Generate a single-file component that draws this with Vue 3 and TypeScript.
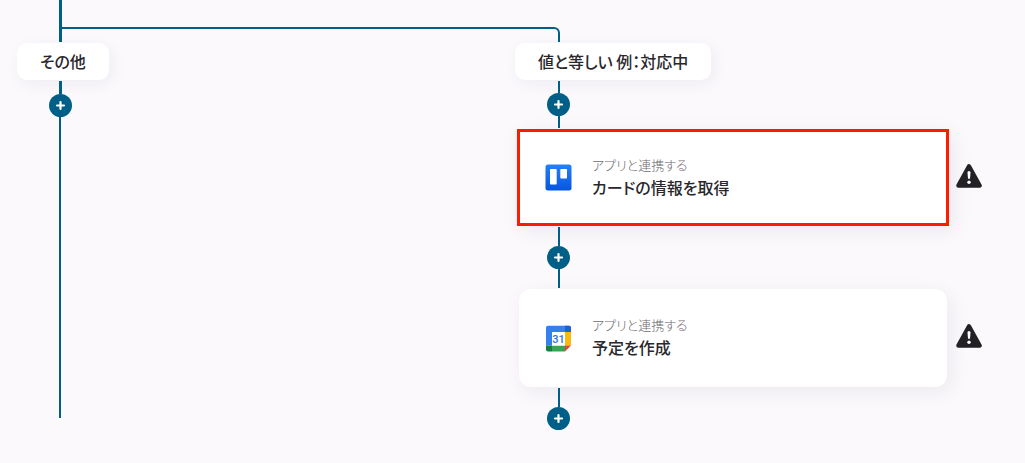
<script setup lang="ts">
interface Step {
  id: string
  app: 'trello' | 'calendar'
  kind: string
  title: string
  selected: boolean
}

const steps: Step[] = [
  { id: 'card', app: 'trello', kind: 'アプリと連携する', title: 'カードの情報を取得', selected: true },
  { id: 'event', app: 'calendar', kind: 'アプリと連携する', title: '予定を作成', selected: false },
]
</script>

<template>
  <main class="flow">
    <div class="fork">
      <span class="trunk"></span>
      <span class="elbow"></span>
    </div>

    <div class="branches">
      <section class="branch">
        <button type="button" class="label">その他</button>
        <div class="connector">
          <span class="line thick"></span>
          <button type="button" class="add" aria-label="追加">
            <svg viewBox="0 0 23 23"><path d="M11.5 8v7M8 11.5h7" /></svg>
          </button>
          <span class="line tail"></span>
        </div>
      </section>

      <section class="branch">
        <button type="button" class="label">値と等しい 例：対応中</button>
        <div class="connector">
          <span class="line short"></span>
          <button type="button" class="add" aria-label="追加">
            <svg viewBox="0 0 23 23"><path d="M11.5 8v7M8 11.5h7" /></svg>
          </button>
          <span class="line short"></span>
        </div>

        <template v-for="(step, index) in steps" :key="step.id">
          <div class="row">
            <button type="button" class="card" :class="{ selected: step.selected }">
              <svg v-if="step.app === 'trello'" class="app" viewBox="0 0 27 27">
                <defs>
                  <linearGradient id="blue" x1="0" y1="0" x2="0" y2="1">
                    <stop offset="0" stop-color="#2580f7" />
                    <stop offset="1" stop-color="#0755df" />
                  </linearGradient>
                </defs>
                <rect x="0.5" y="0.5" width="26" height="26" rx="2.5" fill="url(#blue)" />
                <rect x="5" y="5" width="6.7" height="15.5" rx="0.8" fill="#fff" />
                <rect x="15.3" y="5" width="6.7" height="9.5" rx="0.8" fill="#fff" />
              </svg>
              <svg v-else class="app" viewBox="0 0 27 27">
                <path d="M2.5 0.8H24a2 2 0 0 1 2 2V7H7v13.5H1V2.8a2 2 0 0 1 1.5-2z" fill="#3580f0" />
                <path d="M20 0.8h4a2 2 0 0 1 2 2V7h-6z" fill="#1c63d2" />
                <path d="M20 7h6v13.5h-6z" fill="#fdb90b" />
                <path d="M7 20.5h13v6H7z" fill="#36a556" />
                <path d="M1 20.5h6v6H3a2 2 0 0 1-2-2z" fill="#15803c" />
                <path d="M20 20.5h6l-6 6z" fill="#e94335" />
                <path d="M7 7h13v13.5H7z" fill="#fff" />
                <text x="13.5" y="18" text-anchor="middle" class="day">31</text>
              </svg>
              <span class="copy">
                <span class="kind">{{ step.kind }}</span>
                <span class="title">{{ step.title }}</span>
              </span>
            </button>
            <svg class="warning" viewBox="0 0 26 24" role="img" aria-label="警告">
              <path d="M13 2.5 23.5 21.5h-21z" fill="#232126" stroke="#232126" stroke-width="4.6" stroke-linejoin="round" />
              <path d="M11.5 8.6a1.5 1.5 0 0 1 3 0l-.5 6.2h-2z" fill="#fff" />
              <circle cx="13" cy="18.3" r="1.7" fill="#fff" />
            </svg>
          </div>
          <div class="connector">
            <span class="line"></span>
            <button type="button" class="add" aria-label="追加">
              <svg viewBox="0 0 23 23"><path d="M11.5 8v7M8 11.5h7" /></svg>
            </button>
            <span v-if="index < steps.length - 1" class="line"></span>
          </div>
        </template>
      </section>
    </div>
  </main>
</template>

<style>
body {
  margin: 0;
  background: #fbf9fc;
}
</style>

<style scoped>
.flow {
  box-sizing: border-box;
  min-height: 100vh;
  padding-left: 17px;
  color: #29272c;
  font-family: "Noto Sans CJK JP", "Noto Sans", sans-serif;
  font-feature-settings: "palt";
}

button {
  padding: 0;
  border: 0;
  color: inherit;
  font: inherit;
  font-feature-settings: inherit;
  cursor: pointer;
}

.fork {
  display: flex;
  height: 42px;
  margin-left: 42px;
}

.trunk {
  width: 3px;
  background: #005f86;
}

.elbow {
  box-sizing: border-box;
  width: 498px;
  margin-top: 27px;
  border-top: 2px solid #005f86;
  border-right: 2px solid #005f86;
  border-top-right-radius: 6px;
}

.branches {
  display: grid;
  grid-template-columns: 498px 1fr;
  padding-top: 1px;
}

.branch {
  display: flex;
  flex-direction: column;
  align-items: flex-start;
}

.label {
  height: 37px;
  padding: 0 23px 2px;
  border-radius: 10px;
  background: #fff;
  box-shadow: 3px 4px 16px rgba(40, 30, 60, 0.06);
  font-size: 16px;
  font-weight: 500;
  line-height: 34px;
  white-space: nowrap;
}

.connector {
  display: flex;
  flex-direction: column;
  margin: 1px 0 1px 32px;
}

.line {
  width: 2px;
  height: 19px;
  margin-left: 11px;
  background: #005f86;
}

.line.short {
  height: 12px;
}

.line.thick {
  width: 3px;
  height: 13px;
  margin-left: 10px;
}

.line.tail {
  height: 301px;
  margin-left: 10px;
}

.add {
  width: 23px;
  height: 23px;
  border-radius: 50%;
  background: #005f86;
}

.add svg {
  display: block;
  fill: none;
  stroke: #fff;
  stroke-width: 2.2;
  stroke-linecap: round;
}

.row {
  display: flex;
  align-self: stretch;
  align-items: center;
  gap: 9px;
  padding: 0 43px 0 4px;
}

.row:has(.selected) {
  gap: 7px;
  padding-left: 2px;
}

.card {
  display: flex;
  flex: 1;
  align-items: center;
  gap: 20px;
  box-sizing: border-box;
  min-height: 98px;
  padding: 0 26px;
  border-radius: 12px;
  background: #fff;
  box-shadow: 4px 5px 20px rgba(40, 30, 60, 0.07);
  text-align: left;
}

.card.selected {
  min-height: 97px;
  padding: 0 25px;
  border: 3px solid #ff1a00;
  border-radius: 0;
}

.app {
  width: 27px;
  height: 27px;
}

.day {
  fill: #2f75e6;
  font-family: Roboto, sans-serif;
  font-size: 11px;
  font-weight: 500;
}

.copy {
  display: flex;
  flex-direction: column;
  padding-bottom: 2px;
}

.kind {
  color: #6c6a6f;
  font-size: 13px;
  font-weight: 300;
  line-height: 20px;
}

.title {
  font-size: 16px;
  font-weight: 500;
  line-height: 24px;
}

.warning {
  width: 26px;
  height: 24px;
  padding-bottom: 4px;
}
</style>
